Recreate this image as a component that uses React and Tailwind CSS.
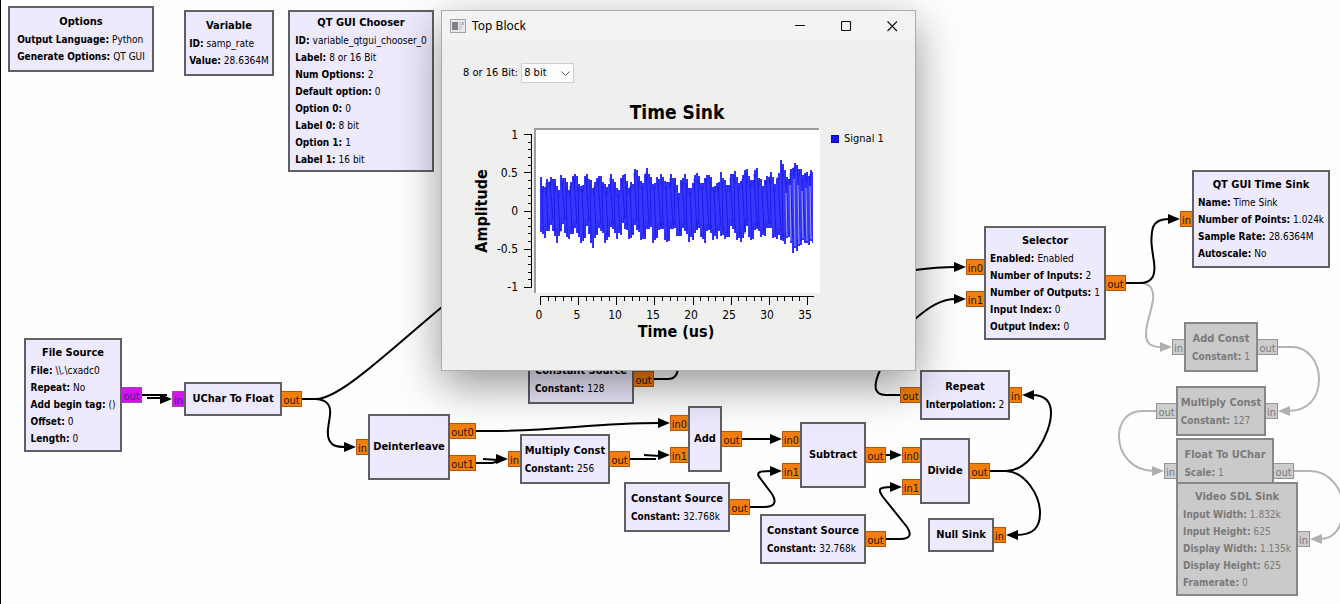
import React from "react";

const NODES = [
  { x: 8, y: 6, w: 146, h: 66, title: "Options", params: [["Output Language", "Python"], ["Generate Options", "QT GUI"]] },
  { x: 184, y: 10, w: 90, h: 66, title: "Variable", params: [["ID", "samp_rate"], ["Value", "28.6364M"]] },
  {
    x: 288, y: 10, w: 146, h: 162, title: "QT GUI Chooser",
    params: [["ID", "variable_qtgui_chooser_0"], ["Label", "8 or 16 Bit"], ["Num Options", "2"], ["Default option", "0"], ["Option 0", "0"], ["Label 0", "8 bit"], ["Option 1", "1"], ["Label 1", "16 bit"]],
  },
  {
    x: 24, y: 338, w: 98, h: 114, title: "File Source",
    params: [["File", "\\\\.\\cxadc0"], ["Repeat", "No"], ["Add begin tag", "()"], ["Offset", "0"], ["Length", "0"]],
  },
  { x: 184, y: 382, w: 98, h: 34, title: "UChar To Float", params: [] },
  { x: 368, y: 414, w: 82, h: 66, title: "Deinterleave", params: [] },
  { x: 528, y: 354, w: 106, h: 50, title: "Constant Source", params: [["Constant", "128"]] },
  { x: 520, y: 434, w: 90, h: 50, title: "Multiply Const", params: [["Constant", "256"]] },
  { x: 688, y: 406, w: 34, h: 66, title: "Add", params: [] },
  { x: 624, y: 482, w: 106, h: 50, title: "Constant Source", params: [["Constant", "32.768k"]] },
  { x: 800, y: 422, w: 66, h: 66, title: "Subtract", params: [] },
  { x: 760, y: 514, w: 106, h: 50, title: "Constant Source", params: [["Constant", "32.768k"]] },
  { x: 920, y: 370, w: 90, h: 50, title: "Repeat", params: [["Interpolation", "2"]] },
  { x: 920, y: 438, w: 50, h: 66, title: "Divide", params: [] },
  { x: 928, y: 518, w: 66, h: 34, title: "Null Sink", params: [] },
  {
    x: 984, y: 226, w: 122, h: 114, title: "Selector",
    params: [["Enabled", "Enabled"], ["Number of Inputs", "2"], ["Number of Outputs", "1"], ["Input Index", "0"], ["Output Index", "0"]],
  },
  {
    x: 1192, y: 170, w: 138, h: 98, title: "QT GUI Time Sink",
    params: [["Name", "Time Sink"], ["Number of Points", "1.024k"], ["Sample Rate", "28.6364M"], ["Autoscale", "No"]],
  },
  { x: 1184, y: 322, w: 74, h: 50, off: true, title: "Add Const", params: [["Constant", "1"]] },
  { x: 1176, y: 386, w: 90, h: 50, off: true, title: "Multiply Const", params: [["Constant", "127"]] },
  { x: 1176, y: 438, w: 98, h: 50, off: true, title: "Float To UChar", params: [["Scale", "1"]] },
  {
    x: 1176, y: 482, w: 122, h: 114, off: true, title: "Video SDL Sink",
    params: [["Input Width", "1.832k"], ["Input Height", "625"], ["Display Width", "1.135k"], ["Display Height", "625"], ["Framerate", "0"]],
  },
];

// [x, y, width, label, kind]
const PORTS = [
  [121, 387, 21, "out", "byte"], [172, 391, 13, "in", "byte"],
  [281, 391, 21, "out", "float"],
  [356, 439, 13, "in", "float"], [449, 423, 27, "out0", "float"], [449, 455, 27, "out1", "float"],
  [633, 371, 21, "out", "float"],
  [508, 451, 13, "in", "float"], [609, 451, 21, "out", "float"],
  [670, 415, 19, "in0", "float"], [670, 447, 19, "in1", "float"], [721, 431, 21, "out", "float"],
  [729, 499, 21, "out", "float"],
  [782, 431, 19, "in0", "float"], [782, 463, 19, "in1", "float"], [865, 447, 21, "out", "float"],
  [865, 531, 21, "out", "float"],
  [900, 387, 21, "out", "float"], [1009, 387, 13, "in", "float"],
  [902, 447, 19, "in0", "float"], [902, 479, 19, "in1", "float"], [969, 463, 21, "out", "float"],
  [993, 527, 13, "in", "float"],
  [966, 259, 19, "in0", "float"], [966, 291, 19, "in1", "float"], [1105, 275, 21, "out", "float"],
  [1180, 211, 13, "in", "float"],
  [1172, 339, 13, "in", "off"], [1257, 339, 21, "out", "off"],
  [1156, 403, 21, "out", "off"], [1265, 403, 13, "in", "off"],
  [1164, 463, 13, "in", "off"], [1273, 463, 21, "out", "off"],
  [1297, 531, 13, "in", "off"],
];

const PORT_STYLE = {
  float: "border-[#b4561a] bg-[#f27f0c] text-[#2a1404]",
  byte: "border-[#9450a8] bg-[#d414ee] text-[#4a1a8c]",
  off: "border-[#949494] bg-[#cdcdcd] text-[#7c7c7c]",
};

const OFF_WIRES = [
  "M1142 283C1151 284 1154 290 1153 300C1150 318 1146 322 1146 334C1146 344 1151 347 1162 347",
  "M1278 347H1292C1308 347 1319 362 1319 379C1319 398 1308 411 1288 411",
  "M1156 411H1142C1126 411 1119 424 1119 436C1119 454 1132 471 1154 471",
  "M1294 471H1310C1330 471 1343 490 1343 507C1343 528 1334 539 1320 539",
];

const WIRES = [
  "M142 395H167M147 398H162",
  "M302 399H316C340 399 390 350 442 307C540 225 780 280 915 270C930 268 942 267 956 267",
  "M316 399C328 400 331 406 330 415C329 425 327 428 328 436C330 446 336 447 346 447",
  "M476 431H488C560 431 590 423 660 423",
  "M476 463H492L500 461M483 459L498 460",
  "M630 459H656M644 455L660 456",
  "M654 379H668C675 379 678 375 678 366",
  "M742 439H772",
  "M750 507H764C775 507 777 502 772 494L760 478C755 472 760 471 772 471",
  "M886 539H900C912 539 911 533 907 527L883 497C877 489 879 487 892 487",
  "M886 455H892",
  "M900 395H886C873 395 873 385 881 368C890 345 900 333 915 319C930 306 942 299 956 299",
  "M990 471H1006C1030 471 1051 434 1051 413C1051 400 1044 395 1032 395",
  "M1006 471C1026 472 1040 496 1040 513C1040 528 1033 535 1016 535",
  "M1126 283H1140C1151 283 1156 277 1154 262C1151 243 1151 240 1152 232C1153 223 1158 219 1170 219",
];

// [tip x, tip y, direction]
const ARROWS = [
  [172, 399, 1], [356, 447, 1], [670, 423, 1], [508, 459, 1], [670, 455, 1], [782, 439, 1], [782, 471, 1],
  [902, 455, 1], [902, 487, 1], [966, 267, 1], [966, 299, 1], [1180, 219, 1], [1022, 395, -1], [1006, 535, -1],
];
const OFF_ARROWS = [[1172, 347, 1], [1164, 471, 1], [1278, 411, -1], [1310, 539, -1]];

const arrow = ([x, y, d]) => `M${x} ${y}L${x - 12 * d} ${y - 5}V${y + 5}Z`;

function Wires() {
  return (
    <svg className="absolute left-0 top-0 h-full w-full" aria-hidden="true">
      <g fill="none" strokeWidth="2">
        <g stroke="#b4b4b4">{OFF_WIRES.map((d) => <path key={d} d={d} />)}</g>
        <g stroke="#000">{WIRES.map((d) => <path key={d} d={d} />)}</g>
      </g>
      <path d={OFF_ARROWS.map(arrow).join("")} fill="#b0b0b0" />
      <path d={ARROWS.map(arrow).join("")} fill="#000" />
    </svg>
  );
}

function Node({ x, y, w, h, off, title, params }) {
  return (
    <section
      className={`absolute flex flex-col items-center justify-center whitespace-nowrap border-2 ${off ? "border-[#888888] bg-[#cacaca] text-[#7a7a7a]" : "border-[#606064] bg-[#eeeafe] text-black"}`}
      style={{ left: x, top: y, width: w, height: h }}
    >
      <div>
        <h2 className="text-center text-[11px] font-bold leading-[18px]">{title}</h2>
        {params.length > 0 && (
          <dl className="text-[10px] leading-[17px]">
            {params.map(([k, v]) => (
              <div key={k} className="flex gap-[3px]">
                <dt className="font-bold">{k}:</dt>
                <dd>{v}</dd>
              </div>
            ))}
          </dl>
        )}
      </div>
    </section>
  );
}

function Port({ port: [x, y, w, label, kind] }) {
  return (
    <span
      className={`absolute flex h-4 items-center justify-center border pt-1 text-[11px] leading-3 ${PORT_STYLE[kind]}`}
      style={{ left: x, top: y, width: w }}
    >
      {label}
    </span>
  );
}

// Envelope control points, three units to the pixel.
const TOP = [298,172,304,190,310,210,316,205,322,178,333,176,338,170,346,195,350,208,358,200,364,168,372,178,380,190,386,212,392,212,396,163,406,165,412,178,418,200,428,200,432,178,440,163,448,178,454,205,464,192,470,182,476,160,482,180,488,182,494,205,502,200,508,182,514,166,520,188,528,205,536,210,542,185,549,160,556,178,562,205,572,190,580,185,584,151,592,152,598,185,606,190,614,175,621,145,628,170,634,185,642,192,648,205,652,170,666,165,672,190,680,188,686,180,694,165,702,178,712,210,720,212,726,170,733,165,740,185,748,210,756,205,762,172,773,158,780,198,788,190,792,178,797,188,804,157,812,185,820,213,828,195,836,185,842,160,850,180,856,205,864,190,870,185,876,156,884,157,890,185,898,180,904,208,906,165,914,155,921,148,928,185,938,180,948,145,956,175,964,190,970,210,978,175,984,165,994,160,1000,190,1006,212,1010,180,1018,150,1024,122,1030,150,1036,170,1044,180,1052,155,1062,133,1074,140,1082,155,1092,165,1100,157,1110,160,1117,150];
const BOTTOM = [300,325,312,350,318,340,328,318,338,320,348,367,356,340,364,315,374,325,380,355,390,350,400,325,410,330,420,367,428,366,436,325,446,328,456,382,464,350,474,325,484,330,496,365,504,345,514,315,524,330,528,355,540,340,546,305,556,325,570,358,580,325,590,322,600,345,608,367,616,330,624,320,634,330,640,365,650,345,660,320,670,330,680,376,690,325,700,322,716,352,726,330,734,325,748,362,758,355,766,320,776,330,792,365,800,330,808,318,818,358,828,355,838,318,846,355,862,352,870,325,880,325,894,363,904,360,914,320,924,330,932,363,942,335,950,315,958,335,968,355,978,325,988,318,1000,350,1010,355,1020,352,1034,370,1044,345,1052,350,1056,395,1066,393,1076,375,1086,368,1096,366,1104,372,1112,372,1118,362];

function sample(points, x) {
  for (let i = 2; i < points.length; i += 2) {
    if (x <= points[i]) {
      const t = Math.max(0, (x - points[i - 2]) / (points[i] - points[i - 2]));
      return points[i - 1] + t * (points[i + 1] - points[i - 1]);
    }
  }
  return points[points.length - 1];
}

const over = (points, u) => [0, 1, 2, 3, 4, 5].map((d) => sample(points, u + d));

// Two-pixel bars reaching the extremes of the envelope, with a small dip between neighbours.
const bars = Array.from({ length: 137 }, (_, i) => {
  const u = 299 + i * 6;
  return {
    x: 77 + i * 2,
    w: i === 136 ? 1 : 2,
    top: Math.round(Math.min(...over(TOP, u)) / 3 + 20 + [0, 3, 0, 1, 4][i % 5]),
    bottom: Math.round(Math.max(...over(BOTTOM, u)) / 3 + 22 - [0, 2, 0, 4][i % 4]),
  };
});
const wave = bars.map((b) => `M${b.x} ${b.top}h${b.w}V${b.bottom}h${-b.w}Z`).join("");
const edges = bars
  .map((b, i) => {
    const next = bars[i + 1];
    if (!next) return "";
    const x = b.x + 1.5;
    return `M${x} ${b.top}V${Math.max(b.top, next.top) + 7}M${x} ${b.bottom}V${Math.min(b.bottom, next.bottom) - 7}`;
  })
  .join("");
const dark = bars
  .filter((_, i) => i % 2 === 1)
  .map((b, i) => `M${b.x} ${b.top + 4}L${b.x + 1 + (i % 3)} ${b.bottom - 4}`)
  .join("");
const light = bars
  .filter((_, i) => i > 122 && i % 2 === 1)
  .map((b) => `M${b.x} ${b.top + 16}L${b.x + 1} ${b.bottom - 2}`)
  .join("");

const Y_LABELS = ["1", "0.5", "0", "-0.5", "-1"];
const yTick = (i) => Math.round(35 + i * 7.65) + 0.5;
const xTick = (i) => Math.round(77 + i * 7.63) + 0.5;

function TimeSinkChart() {
  return (
    <svg width="357" height="250" viewBox="0 0 357 250" role="img" aria-label="Time Sink" className="shrink-0">
      <text x="214" y="20" textAnchor="middle" className="text-[19px] font-bold">Time Sink</text>
      <path d="M71 29H357V194H71Z" fill="#fff" />
      <path d="M72 194V30H356" fill="none" stroke="#9c9c9c" strokeWidth="2" />
      <path d={wave} fill="#3636ff" />
      <path d={edges} fill="none" stroke="#2626d2" strokeWidth="1" opacity="0.7" />
      <path d={dark} fill="none" stroke="#1414e0" strokeWidth="1" opacity="0.8" />
      <path d={light} fill="none" stroke="#a0a0ff" strokeWidth="1" />
      <g stroke="#000" fill="none" strokeWidth="1" shapeRendering="crispEdges">
        <path d={"M68.5 35V189" + Array.from({ length: 21 }, (_, i) => `M68.5 ${yTick(i)}h${i % 5 ? -4 : -8}`).join("")} />
        <path d={"M77 197.5H351" + Array.from({ length: 36 }, (_, i) => `M${xTick(i)} 197.5v${i % 5 ? 4 : 8}`).join("")} />
      </g>
      <g className="text-[12px]">
        {Y_LABELS.map((t, i) => (
          <text key={t} x="55" y={40 + i * 38} textAnchor="end">{t}</text>
        ))}
        {Array.from({ length: 8 }, (_, i) => (
          <text key={i} x={76 + i * 38} y="220" textAnchor="middle">{i * 5}</text>
        ))}
      </g>
      <text x="213" y="238" textAnchor="middle" className="text-[16px] font-bold">Time (us)</text>
      <text transform="translate(24 112) rotate(-90)" textAnchor="middle" className="text-[16px] font-bold">Amplitude</text>
    </svg>
  );
}

function TopBlockWindow() {
  return (
    <section className="absolute left-[441px] top-[10px] flex w-[475px] flex-col border border-[#adadad] bg-[#efefee] pb-[21px] shadow-[0_14px_42px_0_rgba(0,0,0,0.42)]">
      <header className="flex h-[30px] items-center bg-[#f3f3f3] pl-2">
        <svg width="16" height="14" viewBox="0 0 16 14" className="mr-[6px]" aria-hidden="true">
          <rect x="0.5" y="0.5" width="15" height="13" fill="#e9e9ec" stroke="#a2a2a6" />
          <rect x="2" y="3" width="6" height="8" fill="#808088" />
          <rect x="9" y="3" width="3" height="8" fill="#c9d3e2" />
          <rect x="12" y="3" width="2" height="3" fill="#b4b8c0" />
        </svg>
        <h1 className="grow font-['Noto_Sans',sans-serif] text-[12px] leading-4">Top Block</h1>
        <button aria-label="Minimize" className="flex h-full w-[46px] items-center justify-center">
          <svg width="11" height="11" viewBox="0 0 11 11"><path d="M0 4.5H10" stroke="#111" /></svg>
        </button>
        <button aria-label="Maximize" className="flex h-full w-[46px] items-center justify-center">
          <svg width="11" height="11" viewBox="0 0 11 11"><rect x="0.5" y="0.5" width="9" height="9" rx="1" fill="none" stroke="#111" strokeWidth="1.2" /></svg>
        </button>
        <button aria-label="Close" className="flex h-full w-[46px] items-center justify-center">
          <svg width="11" height="11" viewBox="0 0 11 11"><path d="M0.5 0.5L10 10M10 0.5L0.5 10" stroke="#111" strokeWidth="1.1" /></svg>
        </button>
      </header>
      <div className="flex flex-col gap-4 pl-[21px] pt-[22px]">
        <div className="flex h-5 items-center gap-[3px] text-[11px]">
          <label htmlFor="bits">8 or 16 Bit:</label>
          <span className="relative flex">
            <select id="bits" defaultValue="8 bit" className="h-5 w-[53px] appearance-none border border-[#cfcfcf] bg-[#fdfdfd] pl-[2px] text-[11px] leading-4">
              <option>8 bit</option>
              <option>16 bit</option>
            </select>
            <svg width="9" height="5" viewBox="0 0 9 5" className="pointer-events-none absolute right-1 top-2" aria-hidden="true">
              <path d="M0.5 0.5L4.5 4.5L8.5 0.5" fill="none" stroke="#555" />
            </svg>
          </span>
        </div>
        <div className="flex items-start gap-[11px]">
          <TimeSinkChart />
          <div className="flex items-center gap-[5px] pt-8 text-[11px] leading-4">
            <span className="h-2 w-2 border border-[#0808b0] bg-[#1414ff]" />
            Signal 1
          </div>
        </div>
      </div>
    </section>
  );
}

export default function App() {
  return (
    <main className="relative h-screen w-full overflow-hidden border-l border-black bg-[#fefefe] font-['DejaVu_Sans_Condensed','DejaVu_Sans',sans-serif] text-black">
      <div className="absolute inset-y-0 -left-px right-0">
        <Wires />
        {PORTS.map((p) => <Port key={`${p[0]}-${p[1]}`} port={p} />)}
        {NODES.map((n) => <Node key={`${n.x}-${n.y}`} {...n} />)}
        <TopBlockWindow />
      </div>
    </main>
  );
}
